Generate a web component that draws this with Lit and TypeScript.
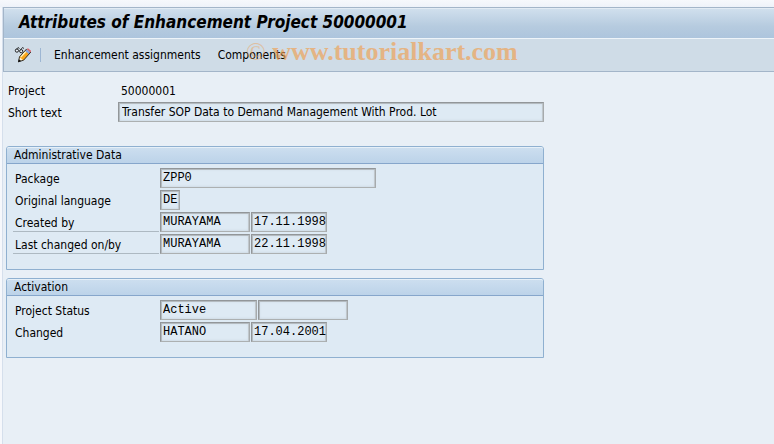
import { LitElement, html, svg, css } from "lit";
import { customElement } from "lit/decorators.js";

interface Field {
  name: string;
  value: string;
  size: string;
}
interface Row {
  label: string;
  ruled?: boolean;
  fields: Field[];
}
interface Group {
  title: string;
  rows: Row[];
}

const GROUPS: Group[] = [
  {
    title: "Administrative Data",
    rows: [
      { label: "Package", fields: [{ name: "Package", value: "ZPP0", size: "xl" }] },
      { label: "Original language", fields: [{ name: "Original language", value: "DE", size: "xs" }] },
      {
        label: "Created by",
        ruled: true,
        fields: [
          { name: "Created by", value: "MURAYAMA", size: "md" },
          { name: "Created on", value: "17.11.1998", size: "date" },
        ],
      },
      {
        label: "Last changed on/by",
        ruled: true,
        fields: [
          { name: "Last changed by", value: "MURAYAMA", size: "md" },
          { name: "Last changed on", value: "22.11.1998", size: "date" },
        ],
      },
    ],
  },
  {
    title: "Activation",
    rows: [
      {
        label: "Project Status",
        fields: [
          { name: "Project Status", value: "Active", size: "lg" },
          { name: "Status detail", value: "", size: "md" },
        ],
      },
      {
        label: "Changed",
        fields: [
          { name: "Changed by", value: "HATANO", size: "md" },
          { name: "Changed on", value: "17.04.2001", size: "date" },
        ],
      },
    ],
  },
];

/* Display/change: spectacles behind a pencil */
const displayChangeIcon = svg`
  <svg viewBox="0 0 18 16" width="18" height="16" aria-hidden="true">
    <path d="M1.5 3.5L4 0.5L5.5 1.5M6.5 3L8.5 0.5L10 1.5" fill="none" stroke="#222" stroke-width="0.9"/>
    <circle cx="2.9" cy="3.6" r="1.6" fill="#e6eef5" stroke="#111" stroke-width="0.9"/>
    <circle cx="7.2" cy="4.2" r="1.6" fill="#e6eef5" stroke="#111" stroke-width="0.9"/>
    <path d="M4.5 14.5L5.5 9.6L12.8 1.8L17 5.2L9.6 13.2Z" fill="#f9a51a"/>
    <path d="M6.6 9.9L12 4.1" stroke="#fff0b8" stroke-width="1.8"/>
    <path d="M11 3.9L12.8 2L16.7 5.4L15 7.3Z" fill="#86a2dc"/>
    <path d="M12.8 2L14 1.3L17 3.8L16.7 5.4Z" fill="#d9606c"/>
    <path d="M5.5 10L9.2 13.2L4.5 14.8Z" fill="#fff2cf"/>
    <path d="M4.5 14.8L5.5 9.8L12.6 2M16.8 5L9.6 13.2L4.5 14.8" fill="none" stroke="#222" stroke-width="0.9"/>
    <path d="M4 15.2L4.9 12.2L7.2 14.1Z" fill="#111"/>
  </svg>`;

@customElement("app-root")
export class AppRoot extends LitElement {
  static styles = css`
    :host {
      display: block;
      box-sizing: border-box;
      min-height: 100vh;
      padding: 7px 0 0 2px;
      background: linear-gradient(#f6f8fc, #eef2f9 7px, #f6f8fc 8px);
      font: 12px/20px "DejaVu Sans Condensed", "DejaVu Sans", sans-serif;
      font-stretch: condensed;
      color: #000;
    }
    * {
      box-sizing: border-box;
    }
    .window {
      min-height: calc(100vh - 7px);
      border-left: 1px solid #d5dfec;
      background: #e8eff6;
    }
    .head {
      position: relative;
      border: solid #a3b5c9;
      border-width: 1px 0 1px 1px;
    }
    .title {
      margin: 0;
      height: 31px;
      padding-left: 15px;
      border-top: 1px solid #e2ebf4;
      border-bottom: 1px solid #eef4f9;
      background: linear-gradient(#d0dfed, #b6cbdf 60%, #adc5dd);
      font-size: 17px;
      line-height: 26px;
      font-weight: bold;
      font-style: italic;
      white-space: nowrap;
    }
    .toolbar {
      display: flex;
      align-items: center;
      height: 32px;
      padding-left: 10px;
      background: #cfdce7;
    }
    .toolbar button {
      border: 0;
      padding: 0;
      background: none;
      font: inherit;
      color: inherit;
    }
    .icon {
      display: flex;
    }
    .sep {
      width: 1px;
      height: 14px;
      margin: 0 13px 0 8px;
      background: #9db6d3;
    }
    .toolbar .text + .text {
      margin-left: 17px;
    }
    .mark {
      position: absolute;
      left: 242px;
      top: 28px;
      font: bold 26px/32px "Liberation Serif", serif;
      color: #f0a050;
      opacity: 0.65;
      pointer-events: none;
    }
    .copy {
      font-weight: normal;
      opacity: 0.7;
    }
    .form {
      display: flex;
      flex-direction: column;
      max-width: 541px;
      padding: 8px 0 0 3px;
    }
    .row {
      display: flex;
      gap: 1px;
      margin-bottom: 2px;
      height: 20px;
    }
    .label {
      flex: none;
      width: 146px;
      padding-left: 2px;
      line-height: 22px;
      white-space: nowrap;
    }
    .head-row .label {
      width: 111px;
    }
    .ruled {
      border-bottom: 1px solid #adb9c2;
    }
    .plain {
      padding-left: 3px;
      line-height: 22px;
    }
    input {
      height: 20px;
      min-width: 0;
      margin: 0;
      padding: 0 1px 0 2px;
      border: 1px solid;
      border-color: #929699 #a6aaac #acb0b1 #929699;
      border-radius: 0;
      outline: 0;
      background: #deeaf4;
      box-shadow: inset 1px 1px 0 #b4bbc0, inset -1px 0 0 #c0c7cc, inset 0 0 3px #c3ced8;
      font: 12px/18px "Liberation Mono", monospace;
      color: #000;
    }
    .full {
      flex: 1;
      padding-left: 3px;
      font: inherit;
    }
    .xs { width: 20px; }
    .date {
      width: 76px;
      padding-right: 0;
    }
    .md { width: 90px; }
    .lg { width: 97px; }
    .xl { width: 216px; }
    .group {
      margin: 0 0 8px;
      padding-bottom: 13px;
      border: 1px solid #8fb0d0;
      border-radius: 3px 3px 0 0;
      background: #deeaf4;
    }
    .first {
      margin-top: 22px;
    }
    .group h2 {
      margin: 0 0 4px;
      height: 17px;
      padding-left: 7px;
      border-top: 1px solid #e6f0f8;
      border-bottom: 1px solid #86a6cb;
      border-radius: 2px 2px 0 0;
      background: linear-gradient(#ccdeef, #bcd3e9);
      font: inherit;
      line-height: 15px;
    }
    .group .row {
      padding-left: 6px;
    }
  `;

  private renderGroup(g: Group, i: number) {
    return html`
      <section class="group ${i === 0 ? "first" : ""}">
        <h2>${g.title}</h2>
        ${g.rows.map((r, n) => {
          const id = `f${i}-${n}`;
          return html`<div class="row">
            <label class="label ${r.ruled ? "ruled" : ""}" for=${id}>${r.label}</label>
            ${r.fields.map(
              (f, k) => html`<input
                id=${k ? `${id}-${k}` : id}
                class=${f.size}
                aria-label=${f.name}
                .value=${f.value}
                readonly
              />`
            )}
          </div>`;
        })}
      </section>
    `;
  }

  render() {
    return html`
      <main class="window">
        <header class="head">
          <h1 class="title">Attributes of Enhancement Project 50000001</h1>
          <nav class="toolbar">
            <button class="icon" aria-label="Display/Change">${displayChangeIcon}</button>
            <span class="sep"></span>
            <button class="text">Enhancement assignments</button>
            <button class="text">Components</button>
          </nav>
          <span class="mark"><span class="copy">©</span> www.tutorialkart.com</span>
        </header>
        <form class="form">
          <div class="row head-row">
            <span class="label">Project</span>
            <span class="plain">50000001</span>
          </div>
          <div class="row head-row">
            <label class="label" for="short">Short text</label>
            <input id="short" class="full" .value=${"Transfer SOP Data to Demand Management With Prod. Lot"} readonly />
          </div>
          ${GROUPS.map((g, i) => this.renderGroup(g, i))}
        </form>
      </main>
    `;
  }
}
